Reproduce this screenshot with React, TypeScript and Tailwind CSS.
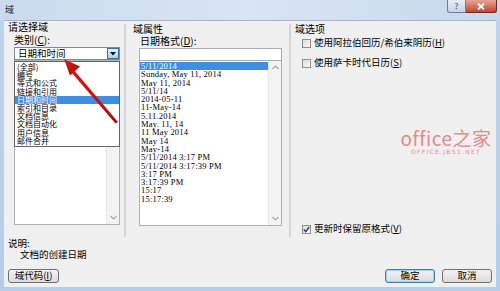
import React from 'react';

const categories = ['(全部)', '编号', '等式和公式', '链接和引用', '日期和时间', '索引和目录', '文档信息', '文档自动化', '用户信息', '邮件合并'];

const formats = [
  '5/11/2014',
  'Sunday, May 11, 2014',
  'May 11, 2014',
  '5/11/14',
  '2014-05-11',
  '11-May-14',
  '5.11.2014',
  'May. 11, 14',
  '11 May 2014',
  'May 14',
  'May-14',
  '5/11/2014 3:17 PM',
  '5/11/2014 3:17:39 PM',
  '3:17 PM',
  '3:17:39 PM',
  '15:17',
  '15:17:39',
];

const Scrollbar: React.FC = () => (
  <div className="w-[13px] h-full bg-[#f3f3f3] border-l border-[#e6e6e6] flex flex-col justify-between items-center py-[4px]">
    <svg width="7" height="5" viewBox="0 0 7 5">
      <path d="M0.5 4 L3.5 1 L6.5 4" fill="none" stroke="#a8a8a8" strokeWidth="1.2" />
    </svg>
    <svg width="7" height="5" viewBox="0 0 7 5">
      <path d="M0.5 1 L3.5 4 L6.5 1" fill="none" stroke="#a8a8a8" strokeWidth="1.2" />
    </svg>
  </div>
);

const Checkbox: React.FC<{ checked?: boolean }> = ({ checked }) => (
  <div className="w-[9px] h-[9px] border border-[#8e8f8f] bg-gradient-to-br from-[#dcdcdc] to-[#fbfbfb] flex items-center justify-center shrink-0">
    {checked && (
      <svg width="7" height="7" viewBox="0 0 7 7">
        <path d="M0.8 3.6 L2.8 5.6 L6.2 1" fill="none" stroke="#2a3f7a" strokeWidth="1.4" />
      </svg>
    )}
  </div>
);

const Button: React.FC<{ children: React.ReactNode; primary?: boolean; className?: string }> = ({ children, primary, className }) => (
  <div
    className={
      'h-[14px] rounded-[3px] border flex items-center justify-center text-[9.5px] leading-none text-black bg-gradient-to-b from-[#f3f3f3] to-[#dcdcdc] ' +
      (primary ? 'border-[#3c7fb1] shadow-[inset_0_0_0_1px_#9ed5f1] ' : 'border-[#707070] ') +
      (className ?? '')
    }
  >
    {children}
  </div>
);

export default function App() {
  return (
    <div className="relative w-[500px] h-[291px] overflow-hidden bg-gradient-to-b from-[#c0d4ea] to-[#b6cde8] flex flex-col font-['Noto_Sans_CJK_SC','Noto_Sans',sans-serif] text-black">
      {/* title bar */}
      <div className="h-[20px] flex items-start justify-between bg-gradient-to-r from-[#c9dbee] via-[#d9e5f2] to-[#c6d8ec]">
        <span className="pl-[5px] pt-[5px] text-[9px] leading-[10px] text-[#1e1e1e]">域</span>
        <div className="flex pr-[3px]">
          <div className="w-[19px] h-[13px] border border-[#6d7f96] border-t-0 rounded-bl-[3px] bg-gradient-to-b from-[#e8eef6] to-[#c4d3e6] flex items-center justify-center text-[8px] leading-none text-[#2c3e57]">
            ?
          </div>
          <div className="w-[31px] h-[13px] border border-[#6b2a22] border-t-0 border-l-0 rounded-br-[3px] bg-gradient-to-b from-[#e8a496] to-[#c4402e] flex items-center justify-center">
            <svg width="8" height="7" viewBox="0 0 8 7">
              <path d="M1 0.5 L7 6.5 M7 0.5 L1 6.5" stroke="#ffffff" strokeWidth="1.8" />
            </svg>
          </div>
        </div>
      </div>

      {/* dialog body */}
      <div className="relative flex-1 mx-[4px] mb-[4px] bg-[#f0f0f0] border-t border-[#a5b4c7] flex flex-col">
        <div className="h-[216px] flex">
          {/* left column */}
          <div className="w-[120px] flex flex-col">
            <div className="pl-[4px] h-[12px] text-[10px] leading-[12px]">请选择域</div>
            <div className="pl-[10px] mt-[1px] h-[12px] text-[10px] leading-[12px]">
              类别(<span className="underline">C</span>):
            </div>
            <div className="ml-[10px] w-[106px] mt-[1px] h-[13px] bg-white border border-[#7a8ba0] flex items-center justify-between">
              <span className="pl-[3px] text-[9.5px] leading-none">日期和时间</span>
              <div className="w-[12px] h-[11px] border border-[#3d6f9e] bg-gradient-to-b from-[#e4f1fb] to-[#a8d1f0] flex items-center justify-center">
                <svg width="6" height="4" viewBox="0 0 6 4">
                  <path d="M0 0 L6 0 L3 3.5 Z" fill="#111" />
                </svg>
              </div>
            </div>
            <div className="relative ml-[10px] w-[106px] h-[165px] bg-white border border-[#aeb3b9] flex justify-end">
              <Scrollbar />
              {/* open drop-down of the combo box */}
              <div className="absolute left-[-1px] top-0 w-[106px] bg-white border border-[#646464] flex flex-col py-[1px]">
                {categories.map((c) => (
                  <div
                    key={c}
                    className={
                      'h-[8.2px] pl-[2px] text-[8px] leading-[8.2px] whitespace-nowrap ' +
                      (c === '日期和时间' ? 'bg-[#3e8ee2] text-white' : '')
                    }
                  >
                    {c}
                  </div>
                ))}
              </div>
            </div>
          </div>

          {/* middle column */}
          <div className="mt-[3px] w-[167px] border-l-2 border-r-2 border-l-[#d6d6d6] border-r-[#d6d6d6] flex flex-col">
            <div className="pl-[7px] h-[10px] text-[10px] leading-[10px]">域属性</div>
            <div className="pl-[14px] mt-[1px] h-[12px] text-[10px] leading-[12px]">
              日期格式(<span className="underline">D</span>):
            </div>
            <div className="ml-[13px] w-[143px] mt-[1px] h-[13px] bg-white border border-[#abadb3]" />
            <div className="ml-[13px] w-[143px] h-[165px] bg-white border border-[#aeb3b9] border-t-0 flex">
              <div className="flex-1 flex flex-col pt-[1px] font-['Liberation_Serif',serif]">
                {formats.map((f, i) => (
                  <div
                    key={f}
                    className={
                      'h-[8.3px] pl-[1px] text-[8.5px] leading-[8.3px] whitespace-pre tracking-[0.2px] ' +
                      (i === 0 ? 'bg-[#3e8ee2] text-white' : '')
                    }
                  >
                    {f}
                  </div>
                ))}
              </div>
              <Scrollbar />
            </div>
          </div>

          {/* right column */}
          <div className="mt-[3px] flex-1 flex flex-col pb-[3px]">
            <div className="pl-[4px] h-[10px] text-[10px] leading-[10px]">域选项</div>
            <div className="pl-[11px] mt-[4px] h-[10px] flex items-center gap-[3px] text-[9.5px] leading-none">
              <Checkbox />
              <span>
                使用阿拉伯回历/希伯来阴历(<span className="underline">H</span>)
              </span>
            </div>
            <div className="pl-[11px] mt-[10px] h-[10px] flex items-center gap-[3px] text-[9.5px] leading-none">
              <Checkbox />
              <span>
                使用萨卡时代日历(<span className="underline">S</span>)
              </span>
            </div>
            <div className="mt-auto pl-[11px] h-[10px] flex items-center gap-[3px] text-[9.5px] leading-none">
              <Checkbox checked />
              <span>
                更新时保留原格式(<span className="underline">V</span>)
              </span>
            </div>
          </div>
        </div>

        {/* description + buttons */}
        <div className="pl-[4px] h-[10px] mt-[1px] text-[9.5px] leading-[10px]">说明:</div>
        <div className="pl-[16px] h-[10px] mt-[1px] text-[9.5px] leading-[10px]">文档的创建日期</div>
        <div className="mt-[10px] px-[4px] flex items-center justify-between">
          <Button className="w-[51px]">
            域代码(<span className="underline">I</span>)
          </Button>
          <div className="flex gap-[7px]">
            <Button primary className="w-[50px]">
              确定
            </Button>
            <Button className="w-[50px]">取消</Button>
          </div>
        </div>

        {/* watermark */}
        <div className="absolute left-[399px] top-[107px] w-[86px] flex flex-col items-center text-[#e58a8a] pointer-events-none whitespace-nowrap">
          <span className="text-[19px] leading-[20px] tracking-[0.5px]">office之家</span>
          <span className="mt-[1px] text-[6px] leading-[6px] tracking-[1.3px] font-['DejaVu_Sans',sans-serif]">OFFICE.JB51.NET</span>
        </div>
      </div>

      {/* red annotation arrow */}
      <svg className="absolute left-0 top-0 pointer-events-none" width="500" height="291" viewBox="0 0 500 291">
        <defs>
          <linearGradient id="arrowGrad" x1="0" y1="0" x2="1" y2="1">
            <stop offset="0" stopColor="#e01818" />
            <stop offset="1" stopColor="#a80c0c" />
          </linearGradient>
        </defs>
        <path d="M73 69 L118 122 L115.5 123.5 L71 72 Z" fill="url(#arrowGrad)" />
        <path d="M64 59 L80 66.5 L70 75.5 Z" fill="url(#arrowGrad)" />
      </svg>
    </div>
  );
}
